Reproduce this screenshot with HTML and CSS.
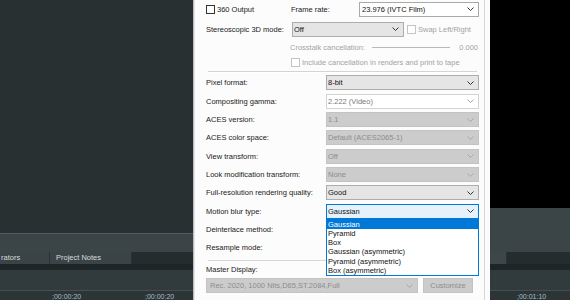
FILE: index.html
```html
<!DOCTYPE html>
<html>
  <head>
    <meta charset="UTF-8" />
    <title>Project Properties - Video</title>
    <link rel="stylesheet" href="styles.css">
  </head>
  <body>
    <div class="app">
      <div class="workspace">
        <div class="explorer"></div>
        <div class="preview"></div>
      </div>
      <div class="tabs">
        <div class="tab tab-first">rators</div>
        <div class="tab tab-notes">Project Notes</div>
        <div class="tab tab-far"></div>
      </div>
      <div class="track-gap"></div>
      <div class="track"></div>
      <div class="ruler">
        <span>;00:00:20</span>
        <span>;00:00:20</span>
        <span></span>
        <span></span>
        <span></span>
        <span>;00:01:10</span>
      </div>
    </div>

    <div class="dialog">
      <div class="panel">
        <div class="row row-frame">
          <div class="check-item"><span class="check"></span>360 Output</div>
          <div>Frame rate:</div>
          <div class="combo combo-edit">
            <span>23.976 (IVTC Film)</span>
            <svg class="chev" viewBox="0 0 7 4"><path d="M.5.5l3 3 3-3"/></svg>
          </div>
        </div>
        <div class="row row-stereo">
          <div class="stereo-label">Stereoscopic 3D mode:</div>
          <div class="combo stereo-combo">
            <span>Off</span>
            <svg class="chev" viewBox="0 0 7 4"><path d="M.5.5l3 3 3-3"/></svg>
          </div>
          <div class="check-item disabled"><span class="check"></span>Swap Left/Right</div>
        </div>
        <div class="row row-crosstalk disabled">
          <div class="crosstalk-label">Crosstalk cancellation:</div>
          <div class="slider"></div>
          <div class="slider-value">0.000</div>
        </div>
        <div class="row row-include disabled">
          <div class="check-item"><span class="check"></span>Include cancellation in renders and print to tape</div>
        </div>
        <div class="separator"></div>

        <div class="settings">
          <div>Pixel format:</div>
          <div class="combo">
            <span>8-bit</span>
            <svg class="chev" viewBox="0 0 7 4"><path d="M.5.5l3 3 3-3"/></svg>
          </div>
          <div>Compositing gamma:</div>
          <div class="combo combo-muted">
            <span>2.222 (Video)</span>
            <svg class="chev" viewBox="0 0 7 4"><path d="M.5.5l3 3 3-3"/></svg>
          </div>
          <div>ACES version:</div>
          <div class="combo combo-off">
            <span>1.1</span>
            <svg class="chev" viewBox="0 0 7 4"><path d="M.5.5l3 3 3-3"/></svg>
          </div>
          <div>ACES color space:</div>
          <div class="combo combo-off">
            <span>Default (ACES2065-1)</span>
            <svg class="chev" viewBox="0 0 7 4"><path d="M.5.5l3 3 3-3"/></svg>
          </div>
          <div>View transform:</div>
          <div class="combo combo-off">
            <span>Off</span>
            <svg class="chev" viewBox="0 0 7 4"><path d="M.5.5l3 3 3-3"/></svg>
          </div>
          <div>Look modification transform:</div>
          <div class="combo combo-off">
            <span>None</span>
            <svg class="chev" viewBox="0 0 7 4"><path d="M.5.5l3 3 3-3"/></svg>
          </div>
          <div>Full-resolution rendering quality:</div>
          <div class="combo">
            <span>Good</span>
            <svg class="chev" viewBox="0 0 7 4"><path d="M.5.5l3 3 3-3"/></svg>
          </div>
          <div>Motion blur type:</div>
          <div class="combo combo-focus">
            <span>Gaussian</span>
            <svg class="chev" viewBox="0 0 7 4"><path d="M.5.5l3 3 3-3"/></svg>
          </div>
          <div>Deinterlace method:</div>
          <div></div>
          <div>Resample mode:</div>
          <div></div>
        </div>
        <div class="separator separator-lower"></div>

        <div class="master-label">Master Display:</div>
        <div class="row row-master">
          <div class="combo combo-off master-combo">
            <span>Rec. 2020, 1000 Nits,D65,ST.2084,Full</span>
            <svg class="chev" viewBox="0 0 7 4"><path d="M.5.5l3 3 3-3"/></svg>
          </div>
          <div class="button button-off">Customize</div>
        </div>
      </div>

      <ul class="dropdown">
        <li class="selected">Gaussian</li>
        <li>Pyramid</li>
        <li>Box</li>
        <li>Gaussian (asymmetric)</li>
        <li>Pyramid (asymmetric)</li>
        <li>Box (asymmetric)</li>
      </ul>
    </div>
  </body>
</html>
```

FILE: styles.css
```css
body {
  margin: 0;
  font-family: "Liberation Sans", Arial, sans-serif;
  font-size: 7.5px;
  background-color: #293032;
  overflow: hidden;
}
.app {
  width: 570px;
  height: 300px;
  background-color: #3b4547;
  display: flex;
  flex-direction: column;
  overflow: hidden;
}
.workspace {
  display: flex;
  align-items: flex-start;
  height: 252px;
  flex-shrink: 0;
}
.explorer {
  width: 340px;
  height: 233px;
  background-color: #293032;
  border-bottom: 1px solid #505b5d;
}
.preview {
  flex: 1;
  height: 208px;
  background-color: #000;
}
.tabs {
  display: flex;
  height: 12px;
  flex-shrink: 0;
  background-color: #252c2e;
}
.tab {
  line-height: 12px;
  color: #d6dddd;
  background-color: #3a4447;
  border-right: 1px solid #2b3234;
  box-sizing: border-box;
}
.tab-first {
  width: 50px;
  padding-left: 1px;
}
.tab-notes {
  width: 82px;
  padding-left: 6px;
}
.tab-far {
  width: 37px;
  margin-left: 338px;
  background-color: #3d4749;
}
.track-gap {
  height: 6px;
  flex-shrink: 0;
  background-color: #1e2527;
}
.track {
  height: 20px;
  flex-shrink: 0;
  background-color: #313a3c;
}
.ruler {
  display: grid;
  grid-template-columns: repeat(5, 93px) 1fr;
  padding-left: 52px;
  height: 10px;
  flex-shrink: 0;
  border-top: 1px solid #465052;
  background-color: #2c3436;
  color: #a2bec6;
  font-size: 7px;
  line-height: 12px;
}
.dialog {
  position: absolute;
  left: 193px;
  top: 0;
  width: 297px;
  height: 300px;
  box-sizing: border-box;
  border-left: 1px solid #bdbdbd;
  background-color: #fcfcfc;
  padding-right: 5px;
  color: #1a1a1a;
}
.panel {
  height: 100%;
  box-sizing: border-box;
  border-left: 1px solid #e4e4e4;
  border-right: 1px solid #d6d6d6;
  padding: 0 5px 0 11px;
}
.row {
  display: flex;
  align-items: center;
}
.row-frame {
  display: grid;
  grid-template-columns: 85px 68px 120px;
  align-items: center;
  height: 18px;
}
.row-stereo {
  height: 22px;
}
.stereo-label {
  width: 86px;
}
.stereo-combo {
  width: 112px;
  margin-right: 3px;
}
.row-crosstalk {
  height: 14px;
  padding-left: 84px;
}
.crosstalk-label {
  width: 82px;
}
.slider {
  width: 78px;
  height: 1px;
  background-color: #b9b9b9;
}
.slider-value {
  flex: 1;
  text-align: right;
  padding-right: 1px;
}
.row-include {
  height: 16px;
  padding-left: 85px;
}
.disabled {
  color: #a3a3a3;
}
.check-item {
  display: flex;
  align-items: center;
}
.check {
  width: 9px;
  height: 9px;
  box-sizing: border-box;
  border: 1px solid #333;
  background-color: #fff;
  margin-right: 2px;
}
.disabled .check {
  border-color: #c4c4c4;
}
.separator {
  margin: 1px 2px 0.83px;
  border-top: 1px solid #d4d4d4;
  border-bottom: 1px solid #fff;
}
.separator-lower {
  margin-top: 2.5px;
  margin-bottom: 0;
}
.settings {
  display: grid;
  grid-template-columns: 120px 153px;
  grid-auto-rows: 18.33px;
  align-items: center;
}
.combo {
  height: 15px;
  box-sizing: border-box;
  border: 1px solid #adadad;
  background-color: #e5e5e5;
  display: flex;
  align-items: center;
  justify-content: space-between;
  padding: 0 4px 0 1px;
  color: #111;
}
.combo-edit {
  background-color: #fff;
  border-color: #a9a9a9;
  padding-left: 2px;
}
.combo-muted {
  background-color: #fff;
  border-color: #d3d3d3;
  color: #7a7a7a;
}
.combo-off {
  background-color: #cccccc;
  border-color: #c3c3c3;
  color: #8c8c8c;
}
.combo-focus {
  background-color: #e5f1fb;
  border-color: #0078d7;
}
.chev {
  width: 7px;
  height: 4px;
  fill: none;
  stroke: #333;
  stroke-width: 1;
}
.combo-muted .chev,
.combo-off .chev {
  stroke: #a8a8a8;
}
.master-label {
  margin-top: 2.5px;
  line-height: 12px;
}
.row-master {
  margin-top: 2px;
  gap: 5px;
}
.master-combo {
  width: 212px;
  padding-left: 3px;
}
.button {
  width: 50px;
  height: 15px;
  box-sizing: border-box;
  display: flex;
  align-items: center;
  justify-content: center;
}
.button-off {
  background-color: #cccccc;
  border: 1px solid #c3c3c3;
  color: #8c8c8c;
}
.dropdown {
  position: absolute;
  left: 132px;
  top: 219px;
  width: 153px;
  box-sizing: border-box;
  margin: 0;
  padding: 0;
  list-style: none;
  border: 1px solid #0078d7;
  background-color: #fff;
  color: #111;
}
.dropdown li {
  height: 9.17px;
  line-height: 9.17px;
  padding-left: 1px;
}
.dropdown li.selected {
  background-color: #0078d7;
  color: #fff;
}
```
